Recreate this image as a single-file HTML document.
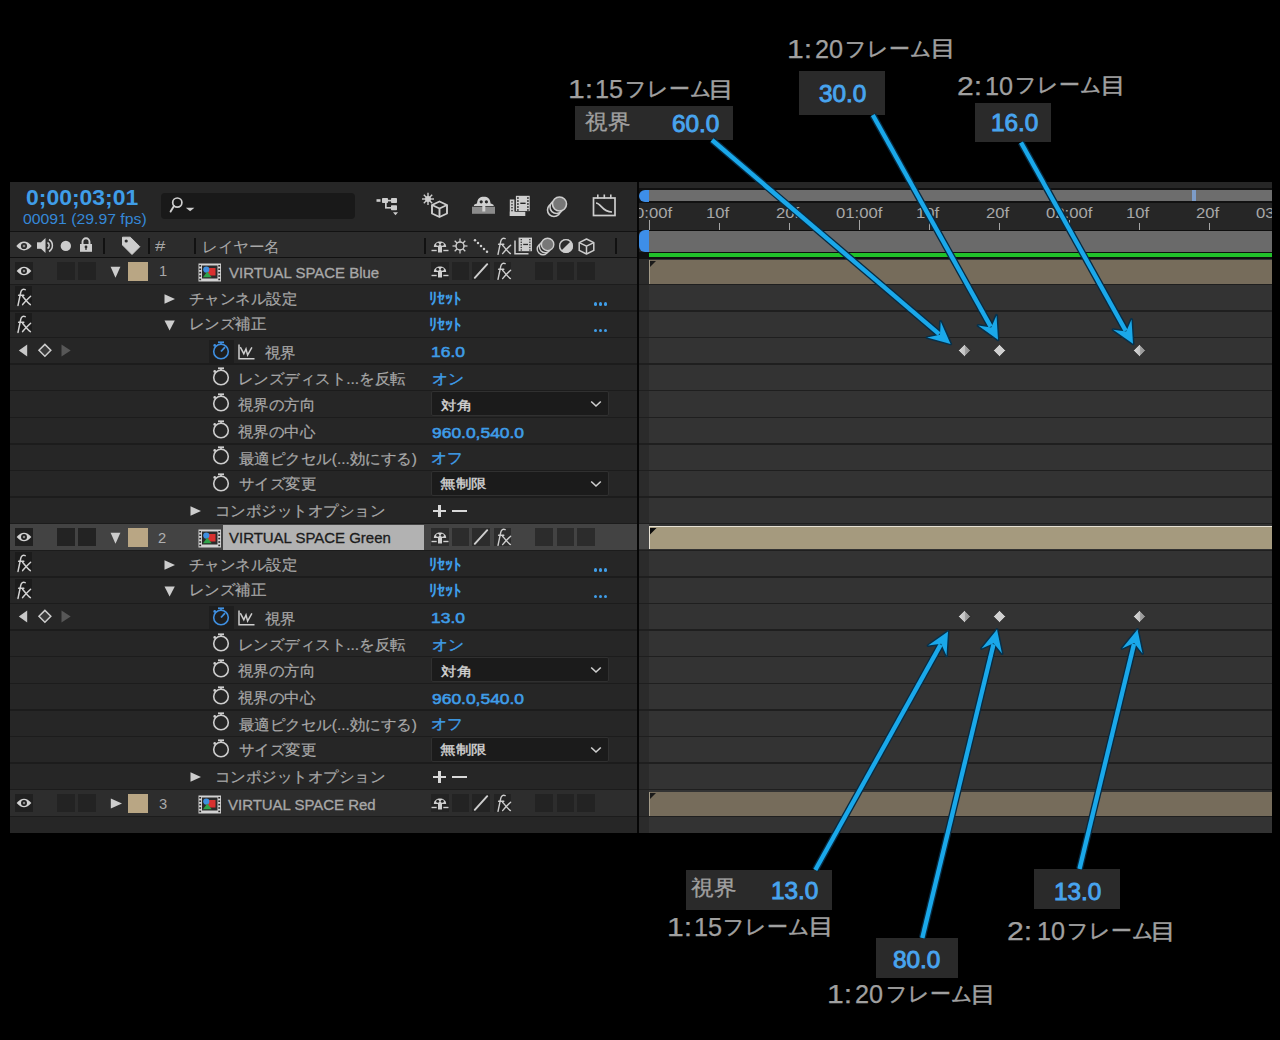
<!DOCTYPE html><html><head><meta charset="utf-8"><style>
*{margin:0;padding:0;box-sizing:border-box}
html,body{width:1280px;height:1040px;overflow:hidden;background:#000}
body{position:relative;font-family:"Liberation Sans",sans-serif;color:#a8a8a8}
.a{position:absolute}
.t{position:absolute;white-space:nowrap;line-height:1;transform-origin:0 0}
svg{position:absolute;overflow:visible}
</style></head><body><div class="a" style="left:10.00px;top:182.00px;width:1262.00px;height:651.00px;background:#242424;"></div><div class="a" style="left:10.00px;top:182.00px;width:628.00px;height:48.60px;background:#262626;"></div><div class="a" style="left:639.00px;top:182.00px;width:633.00px;height:48.60px;background:#262626;"></div><div class="a" style="left:10.00px;top:230.60px;width:1262.00px;height:1.60px;background:#121212;"></div><div class="a" style="left:10.00px;top:232.20px;width:628.00px;height:25.60px;background:#2c2c2c;"></div><div class="a" style="left:10.00px;top:257.00px;width:1262.00px;height:2.00px;background:#111111;"></div><div class="a" style="left:10.00px;top:258.40px;width:628.00px;height:26.60px;background:#2d2d2d;"></div><div class="a" style="left:649.00px;top:258.40px;width:623.00px;height:26.60px;background:#333333;"></div><div class="a" style="left:639.00px;top:258.40px;width:10.00px;height:26.60px;background:#2b2b2b;"></div><div class="a" style="left:10.00px;top:283.50px;width:628.00px;height:1.50px;background:#1c1c1c;"></div><div class="a" style="left:639.00px;top:283.50px;width:633.00px;height:1.50px;background:#1f1f1f;"></div><div class="a" style="left:10.00px;top:285.00px;width:628.00px;height:26.60px;background:#262626;"></div><div class="a" style="left:649.00px;top:285.00px;width:623.00px;height:26.60px;background:#333333;"></div><div class="a" style="left:639.00px;top:285.00px;width:10.00px;height:26.60px;background:#2b2b2b;"></div><div class="a" style="left:10.00px;top:310.10px;width:628.00px;height:1.50px;background:#1c1c1c;"></div><div class="a" style="left:639.00px;top:310.10px;width:633.00px;height:1.50px;background:#1f1f1f;"></div><div class="a" style="left:10.00px;top:311.60px;width:628.00px;height:26.60px;background:#262626;"></div><div class="a" style="left:649.00px;top:311.60px;width:623.00px;height:26.60px;background:#333333;"></div><div class="a" style="left:639.00px;top:311.60px;width:10.00px;height:26.60px;background:#2b2b2b;"></div><div class="a" style="left:10.00px;top:336.70px;width:628.00px;height:1.50px;background:#1c1c1c;"></div><div class="a" style="left:639.00px;top:336.70px;width:633.00px;height:1.50px;background:#1f1f1f;"></div><div class="a" style="left:10.00px;top:338.20px;width:628.00px;height:26.60px;background:#262626;"></div><div class="a" style="left:649.00px;top:338.20px;width:623.00px;height:26.60px;background:#333333;"></div><div class="a" style="left:639.00px;top:338.20px;width:10.00px;height:26.60px;background:#2b2b2b;"></div><div class="a" style="left:10.00px;top:363.30px;width:628.00px;height:1.50px;background:#1c1c1c;"></div><div class="a" style="left:639.00px;top:363.30px;width:633.00px;height:1.50px;background:#1f1f1f;"></div><div class="a" style="left:10.00px;top:364.80px;width:628.00px;height:26.60px;background:#262626;"></div><div class="a" style="left:649.00px;top:364.80px;width:623.00px;height:26.60px;background:#333333;"></div><div class="a" style="left:639.00px;top:364.80px;width:10.00px;height:26.60px;background:#2b2b2b;"></div><div class="a" style="left:10.00px;top:389.90px;width:628.00px;height:1.50px;background:#1c1c1c;"></div><div class="a" style="left:639.00px;top:389.90px;width:633.00px;height:1.50px;background:#1f1f1f;"></div><div class="a" style="left:10.00px;top:391.40px;width:628.00px;height:26.60px;background:#262626;"></div><div class="a" style="left:649.00px;top:391.40px;width:623.00px;height:26.60px;background:#333333;"></div><div class="a" style="left:639.00px;top:391.40px;width:10.00px;height:26.60px;background:#2b2b2b;"></div><div class="a" style="left:10.00px;top:416.50px;width:628.00px;height:1.50px;background:#1c1c1c;"></div><div class="a" style="left:639.00px;top:416.50px;width:633.00px;height:1.50px;background:#1f1f1f;"></div><div class="a" style="left:10.00px;top:418.00px;width:628.00px;height:26.60px;background:#262626;"></div><div class="a" style="left:649.00px;top:418.00px;width:623.00px;height:26.60px;background:#333333;"></div><div class="a" style="left:639.00px;top:418.00px;width:10.00px;height:26.60px;background:#2b2b2b;"></div><div class="a" style="left:10.00px;top:443.10px;width:628.00px;height:1.50px;background:#1c1c1c;"></div><div class="a" style="left:639.00px;top:443.10px;width:633.00px;height:1.50px;background:#1f1f1f;"></div><div class="a" style="left:10.00px;top:444.60px;width:628.00px;height:26.60px;background:#262626;"></div><div class="a" style="left:649.00px;top:444.60px;width:623.00px;height:26.60px;background:#333333;"></div><div class="a" style="left:639.00px;top:444.60px;width:10.00px;height:26.60px;background:#2b2b2b;"></div><div class="a" style="left:10.00px;top:469.70px;width:628.00px;height:1.50px;background:#1c1c1c;"></div><div class="a" style="left:639.00px;top:469.70px;width:633.00px;height:1.50px;background:#1f1f1f;"></div><div class="a" style="left:10.00px;top:471.20px;width:628.00px;height:26.60px;background:#262626;"></div><div class="a" style="left:649.00px;top:471.20px;width:623.00px;height:26.60px;background:#333333;"></div><div class="a" style="left:639.00px;top:471.20px;width:10.00px;height:26.60px;background:#2b2b2b;"></div><div class="a" style="left:10.00px;top:496.30px;width:628.00px;height:1.50px;background:#1c1c1c;"></div><div class="a" style="left:639.00px;top:496.30px;width:633.00px;height:1.50px;background:#1f1f1f;"></div><div class="a" style="left:10.00px;top:497.80px;width:628.00px;height:26.60px;background:#262626;"></div><div class="a" style="left:649.00px;top:497.80px;width:623.00px;height:26.60px;background:#333333;"></div><div class="a" style="left:639.00px;top:497.80px;width:10.00px;height:26.60px;background:#2b2b2b;"></div><div class="a" style="left:10.00px;top:522.90px;width:628.00px;height:1.50px;background:#1c1c1c;"></div><div class="a" style="left:639.00px;top:522.90px;width:633.00px;height:1.50px;background:#1f1f1f;"></div><div class="a" style="left:10.00px;top:524.40px;width:628.00px;height:26.60px;background:#434343;"></div><div class="a" style="left:649.00px;top:524.40px;width:623.00px;height:26.60px;background:#333333;"></div><div class="a" style="left:639.00px;top:524.40px;width:10.00px;height:26.60px;background:#2b2b2b;"></div><div class="a" style="left:10.00px;top:549.50px;width:628.00px;height:1.50px;background:#1c1c1c;"></div><div class="a" style="left:639.00px;top:549.50px;width:633.00px;height:1.50px;background:#1f1f1f;"></div><div class="a" style="left:10.00px;top:551.00px;width:628.00px;height:26.60px;background:#262626;"></div><div class="a" style="left:649.00px;top:551.00px;width:623.00px;height:26.60px;background:#333333;"></div><div class="a" style="left:639.00px;top:551.00px;width:10.00px;height:26.60px;background:#2b2b2b;"></div><div class="a" style="left:10.00px;top:576.10px;width:628.00px;height:1.50px;background:#1c1c1c;"></div><div class="a" style="left:639.00px;top:576.10px;width:633.00px;height:1.50px;background:#1f1f1f;"></div><div class="a" style="left:10.00px;top:577.60px;width:628.00px;height:26.60px;background:#262626;"></div><div class="a" style="left:649.00px;top:577.60px;width:623.00px;height:26.60px;background:#333333;"></div><div class="a" style="left:639.00px;top:577.60px;width:10.00px;height:26.60px;background:#2b2b2b;"></div><div class="a" style="left:10.00px;top:602.70px;width:628.00px;height:1.50px;background:#1c1c1c;"></div><div class="a" style="left:639.00px;top:602.70px;width:633.00px;height:1.50px;background:#1f1f1f;"></div><div class="a" style="left:10.00px;top:604.20px;width:628.00px;height:26.60px;background:#262626;"></div><div class="a" style="left:649.00px;top:604.20px;width:623.00px;height:26.60px;background:#333333;"></div><div class="a" style="left:639.00px;top:604.20px;width:10.00px;height:26.60px;background:#2b2b2b;"></div><div class="a" style="left:10.00px;top:629.30px;width:628.00px;height:1.50px;background:#1c1c1c;"></div><div class="a" style="left:639.00px;top:629.30px;width:633.00px;height:1.50px;background:#1f1f1f;"></div><div class="a" style="left:10.00px;top:630.80px;width:628.00px;height:26.60px;background:#262626;"></div><div class="a" style="left:649.00px;top:630.80px;width:623.00px;height:26.60px;background:#333333;"></div><div class="a" style="left:639.00px;top:630.80px;width:10.00px;height:26.60px;background:#2b2b2b;"></div><div class="a" style="left:10.00px;top:655.90px;width:628.00px;height:1.50px;background:#1c1c1c;"></div><div class="a" style="left:639.00px;top:655.90px;width:633.00px;height:1.50px;background:#1f1f1f;"></div><div class="a" style="left:10.00px;top:657.40px;width:628.00px;height:26.60px;background:#262626;"></div><div class="a" style="left:649.00px;top:657.40px;width:623.00px;height:26.60px;background:#333333;"></div><div class="a" style="left:639.00px;top:657.40px;width:10.00px;height:26.60px;background:#2b2b2b;"></div><div class="a" style="left:10.00px;top:682.50px;width:628.00px;height:1.50px;background:#1c1c1c;"></div><div class="a" style="left:639.00px;top:682.50px;width:633.00px;height:1.50px;background:#1f1f1f;"></div><div class="a" style="left:10.00px;top:684.00px;width:628.00px;height:26.60px;background:#262626;"></div><div class="a" style="left:649.00px;top:684.00px;width:623.00px;height:26.60px;background:#333333;"></div><div class="a" style="left:639.00px;top:684.00px;width:10.00px;height:26.60px;background:#2b2b2b;"></div><div class="a" style="left:10.00px;top:709.10px;width:628.00px;height:1.50px;background:#1c1c1c;"></div><div class="a" style="left:639.00px;top:709.10px;width:633.00px;height:1.50px;background:#1f1f1f;"></div><div class="a" style="left:10.00px;top:710.60px;width:628.00px;height:26.60px;background:#262626;"></div><div class="a" style="left:649.00px;top:710.60px;width:623.00px;height:26.60px;background:#333333;"></div><div class="a" style="left:639.00px;top:710.60px;width:10.00px;height:26.60px;background:#2b2b2b;"></div><div class="a" style="left:10.00px;top:735.70px;width:628.00px;height:1.50px;background:#1c1c1c;"></div><div class="a" style="left:639.00px;top:735.70px;width:633.00px;height:1.50px;background:#1f1f1f;"></div><div class="a" style="left:10.00px;top:737.20px;width:628.00px;height:26.60px;background:#262626;"></div><div class="a" style="left:649.00px;top:737.20px;width:623.00px;height:26.60px;background:#333333;"></div><div class="a" style="left:639.00px;top:737.20px;width:10.00px;height:26.60px;background:#2b2b2b;"></div><div class="a" style="left:10.00px;top:762.30px;width:628.00px;height:1.50px;background:#1c1c1c;"></div><div class="a" style="left:639.00px;top:762.30px;width:633.00px;height:1.50px;background:#1f1f1f;"></div><div class="a" style="left:10.00px;top:763.80px;width:628.00px;height:26.60px;background:#262626;"></div><div class="a" style="left:649.00px;top:763.80px;width:623.00px;height:26.60px;background:#333333;"></div><div class="a" style="left:639.00px;top:763.80px;width:10.00px;height:26.60px;background:#2b2b2b;"></div><div class="a" style="left:10.00px;top:788.90px;width:628.00px;height:1.50px;background:#1c1c1c;"></div><div class="a" style="left:639.00px;top:788.90px;width:633.00px;height:1.50px;background:#1f1f1f;"></div><div class="a" style="left:10.00px;top:790.40px;width:628.00px;height:26.60px;background:#2d2d2d;"></div><div class="a" style="left:649.00px;top:790.40px;width:623.00px;height:26.60px;background:#333333;"></div><div class="a" style="left:639.00px;top:790.40px;width:10.00px;height:26.60px;background:#2b2b2b;"></div><div class="a" style="left:10.00px;top:815.50px;width:628.00px;height:1.50px;background:#1c1c1c;"></div><div class="a" style="left:639.00px;top:815.50px;width:633.00px;height:1.50px;background:#1f1f1f;"></div><div class="a" style="left:10.00px;top:817.00px;width:628.00px;height:16.00px;background:#262626;"></div><div class="a" style="left:649.00px;top:817.00px;width:623.00px;height:16.00px;background:#333333;"></div><div class="a" style="left:639.00px;top:817.00px;width:10.00px;height:16.00px;background:#2b2b2b;"></div><div class="a" style="left:637.40px;top:182.00px;width:2.00px;height:651.00px;background:#060606;"></div><div class="a" style="left:160.80px;top:192.90px;width:194.50px;height:25.80px;background:#191919;border-radius:4px"></div><svg style="left:168px;top:196px" width="30" height="18" viewBox="0 0 30 18"><circle cx="9.3" cy="6.6" r="4.6" fill="none" stroke="#cfcfcf" stroke-width="1.7"/><line x1="6" y1="10" x2="2.6" y2="15.6" stroke="#cfcfcf" stroke-width="1.9" stroke-linecap="round"/><polygon points="17.8,11.8 26.4,11.8 22.1,15.2" fill="#cfcfcf"/></svg><svg style="left:376px;top:197px" width="27" height="21" viewBox="0 0 27 21"><g fill="#cdcdcd"><rect x="0.5" y="2.2" width="4" height="2.6"/><rect x="6" y="1" width="6" height="5" rx="0.8"/><rect x="15" y="1" width="6" height="5" rx="0.8"/><rect x="15" y="8.3" width="6" height="5" rx="0.8"/><rect x="12" y="2.8" width="3" height="1.6"/><rect x="9" y="5" width="1.7" height="6"/><rect x="9" y="10" width="6" height="1.6"/><polygon points="17,15.2 22,15.2 19.5,18.2"/></g></svg><svg style="left:422px;top:192px" width="28" height="26" viewBox="0 0 28 26"><g stroke="#cdcdcd" stroke-width="1.4" fill="none"><line x1="6" y1="0.8" x2="6" y2="13"/><line x1="0" y1="7" x2="12" y2="7"/><line x1="1.8" y1="2.8" x2="10.2" y2="11.2"/><line x1="10.2" y1="2.8" x2="1.8" y2="11.2"/></g><circle cx="6" cy="7" r="3" fill="#cdcdcd"/><g stroke="#cdcdcd" stroke-width="1.9" fill="#262626" stroke-linejoin="round"><polygon points="17.5,9.5 25,13 25,21.5 17.5,25 10,21.5 10,13"/><polyline points="10,13 17.5,16.5 25,13" fill="none"/><line x1="17.5" y1="16.5" x2="17.5" y2="25"/></g></svg><svg style="left:471px;top:195px" width="26" height="21" viewBox="0 0 26 21"><rect x="1" y="11.7" width="23" height="7.1" fill="#8b8b8b"/><path d="M2.8,11 C2.8,9.2 5,9 6,8.6 C6.5,3.2 9,1.8 12.8,1.8 C16.6,1.8 19.1,3.2 19.6,8.6 C20.6,9 22.8,9.2 22.8,11 Z" fill="#d0d0d0"/><circle cx="10.2" cy="6.8" r="1.6" fill="#262626"/><circle cx="15.4" cy="6.8" r="1.6" fill="#262626"/><rect x="11.3" y="8" width="3" height="8.5" fill="#d0d0d0"/></svg><svg style="left:509px;top:195px" width="23" height="22" viewBox="0 0 23 22"><rect x="0.8" y="4.5" width="4.6" height="16.5" fill="#cdcdcd"/><rect x="0.8" y="16.6" width="15.5" height="4.4" fill="#cdcdcd"/><rect x="2.3" y="6.2" width="1.4" height="1.4" fill="#262626"/><rect x="2.3" y="9.1" width="1.4" height="1.4" fill="#262626"/><rect x="2.3" y="12.0" width="1.4" height="1.4" fill="#262626"/><rect x="2.3" y="14.9" width="1.4" height="1.4" fill="#262626"/><rect x="6.4" y="0.3" width="14.8" height="16.3" fill="#262626"/><rect x="6.9" y="0.8" width="13.8" height="15.3" fill="#d0d0d0"/><rect x="8.1" y="2.2" width="1.6" height="1.6" fill="#262626"/><rect x="18.1" y="2.2" width="1.6" height="1.6" fill="#262626"/><rect x="8.1" y="5.2" width="1.6" height="1.6" fill="#262626"/><rect x="18.1" y="5.2" width="1.6" height="1.6" fill="#262626"/><rect x="8.1" y="8.2" width="1.6" height="1.6" fill="#262626"/><rect x="18.1" y="8.2" width="1.6" height="1.6" fill="#262626"/><rect x="8.1" y="11.2" width="1.6" height="1.6" fill="#262626"/><rect x="18.1" y="11.2" width="1.6" height="1.6" fill="#262626"/><rect x="8.1" y="14.2" width="1.6" height="1.6" fill="#262626"/><rect x="18.1" y="14.2" width="1.6" height="1.6" fill="#262626"/><rect x="11.3" y="7.6" width="5.3" height="1.4" fill="#262626"/></svg><svg style="left:545px;top:195px" width="24" height="22" viewBox="0 0 24 22"><g fill="none" stroke="#cdcdcd" stroke-width="1.6"><circle cx="9" cy="15" r="6.5"/><circle cx="11.5" cy="12" r="6.5" fill="#262626"/><circle cx="14.5" cy="9" r="7" fill="#777"/></g></svg><svg style="left:592px;top:194px" width="25" height="23" viewBox="0 0 25 23"><g fill="none" stroke="#cdcdcd" stroke-width="1.7"><rect x="1.5" y="4" width="21.5" height="17.5"/><path d="M4,9 C9,9 10,18 20,18"/></g><g fill="#cdcdcd"><rect x="5" y="0.5" width="1.6" height="4"/><rect x="11.5" y="0.5" width="1.6" height="4"/><rect x="18" y="0.5" width="1.6" height="4"/></g></svg><svg style="left:14.8px;top:239.6px" width="18" height="12" viewBox="0 0 18 12"><g transform="translate(9,6) scale(1.0)"><path d="M-7.7,0 Q0,-8.8 7.7,0 Q0,8.8 -7.7,0Z" fill="#cfcfcf"/><circle r="3.1" fill="#2c2c2c"/><circle r="1.3" fill="#888"/></g></svg><svg style="left:36px;top:237px" width="19" height="17" viewBox="0 0 19 17"><g fill="#cdcdcd"><rect x="1" y="5.3" width="4" height="6.5"/><polygon points="5,5.3 9.5,1 9.5,16 5,11.8"/></g><g fill="none" stroke="#cdcdcd" stroke-width="1.5"><path d="M11.5,5.5 A3.5,3.5 0 0 1 11.5,11.5"/><path d="M13,2.5 A7,7 0 0 1 13,14.5"/></g></svg><svg style="left:60px;top:240px" width="12" height="12" viewBox="0 0 12 12"><circle cx="5.8" cy="5.9" r="5.2" fill="#cdcdcd"/></svg><svg style="left:79px;top:237px" width="15" height="16" viewBox="0 0 15 16"><path d="M3.5,7 V4.8 A3.5,3.5 0 0 1 10.5,4.8 V7" fill="none" stroke="#cdcdcd" stroke-width="1.9"/><rect x="1" y="7" width="12" height="7.8" fill="#cdcdcd"/><circle cx="7" cy="10" r="1.4" fill="#2c2c2c"/><rect x="6.4" y="10" width="1.2" height="3" fill="#2c2c2c"/></svg><div class="a" style="left:103.00px;top:237.50px;width:1.80px;height:16.50px;background:#111;"></div><div class="a" style="left:148.30px;top:237.50px;width:1.80px;height:16.50px;background:#111;"></div><div class="a" style="left:194.00px;top:237.50px;width:1.80px;height:16.50px;background:#111;"></div><div class="a" style="left:424.20px;top:237.50px;width:1.80px;height:16.50px;background:#111;"></div><div class="a" style="left:615.00px;top:237.50px;width:1.80px;height:16.50px;background:#111;"></div><svg style="left:121px;top:236px" width="20" height="19" viewBox="0 0 20 19"><path d="M1.5,1.2 H9.3 L18.8,10.7 L11,18.5 L1.5,9 Z" fill="#cdcdcd" stroke="#cdcdcd" stroke-width="1" stroke-linejoin="round"/><circle cx="5.2" cy="5" r="1.6" fill="#2c2c2c"/></svg><svg style="left:430.5px;top:237.5px" width="18" height="17" viewBox="0 0 18 17"><path d="M2.8,9 C2.8,1.6 15.2,1.6 15.2,9 Z" fill="#cdcdcd"/><rect x="7" y="6" width="4" height="8.5" fill="#cdcdcd"/><circle cx="6.7" cy="6.3" r="1.5" fill="#2c2c2c"/><circle cx="11.3" cy="6.3" r="1.5" fill="#2c2c2c"/><rect x="0.5" y="11.8" width="5.2" height="1.4" fill="#cdcdcd"/><rect x="12.3" y="11.8" width="5.2" height="1.4" fill="#cdcdcd"/></svg><svg style="left:452px;top:237.5px" width="16" height="16" viewBox="0 0 16 16"><g stroke="#cdcdcd" stroke-width="1.3"><line x1="8" y1="0.5" x2="8" y2="15.5"/><line x1="0.5" y1="8" x2="15.5" y2="8"/><line x1="2.7" y1="2.7" x2="13.3" y2="13.3"/><line x1="13.3" y1="2.7" x2="2.7" y2="13.3"/></g><circle cx="8" cy="8" r="4" fill="#2c2c2c" stroke="#cdcdcd" stroke-width="1.5"/></svg><svg style="left:472.5px;top:237.5px" width="16" height="17" viewBox="0 0 16 17"><g fill="#cdcdcd"><circle cx="2.0" cy="2.2" r="1.25"/><circle cx="5.0" cy="5.1" r="1.25"/><circle cx="8.0" cy="8.0" r="1.25"/><circle cx="11.0" cy="10.9" r="1.25"/><circle cx="14.0" cy="13.8" r="1.25"/></g></svg><svg style="left:494.5px;top:236.5px" width="17" height="19" viewBox="0 0 17 19"><g fill="none" stroke="#cdcdcd" stroke-width="1.4" stroke-linecap="round"><path d="M10.2,1.6 C8,0.6 6.4,1.6 5.8,4.2 L3.0,17.4"/><path d="M3.6,7.2 H8.8"/><path d="M7.6,8.2 C9.5,10.5 12.5,14.5 15.4,16.6"/><path d="M15.6,8.2 C12.5,11.0 10.2,13.5 7.6,16.6"/></g></svg><svg style="left:513.5px;top:237px" width="19" height="18" viewBox="0 0 19 18"><polyline points="1,3.5 1,16.8 14.5,16.8" fill="none" stroke="#cdcdcd" stroke-width="1.5"/><rect x="4.6" y="0.6" width="13.4" height="13.6" fill="#cdcdcd"/><rect x="6.6" y="2.0" width="1.3" height="1.3" fill="#2c2c2c"/><rect x="15.2" y="2.0" width="1.3" height="1.3" fill="#2c2c2c"/><rect x="6.6" y="4.6" width="1.3" height="1.3" fill="#2c2c2c"/><rect x="15.2" y="4.6" width="1.3" height="1.3" fill="#2c2c2c"/><rect x="6.6" y="7.2" width="1.3" height="1.3" fill="#2c2c2c"/><rect x="15.2" y="7.2" width="1.3" height="1.3" fill="#2c2c2c"/><rect x="6.6" y="9.8" width="1.3" height="1.3" fill="#2c2c2c"/><rect x="15.2" y="9.8" width="1.3" height="1.3" fill="#2c2c2c"/><rect x="6.6" y="12.4" width="1.3" height="1.3" fill="#2c2c2c"/><rect x="15.2" y="12.4" width="1.3" height="1.3" fill="#2c2c2c"/><rect x="9.2" y="6.8" width="4.8" height="1.3" fill="#2c2c2c"/></svg><svg style="left:535.5px;top:236.5px" width="19" height="19" viewBox="0 0 19 19"><g fill="none" stroke="#cdcdcd" stroke-width="1.4"><circle cx="7" cy="12" r="5.8"/><circle cx="9.2" cy="9.8" r="5.8" fill="#2c2c2c"/><circle cx="11.6" cy="7.4" r="6.2" fill="#777"/></g></svg><svg style="left:557.5px;top:237.5px" width="16" height="16" viewBox="0 0 16 16"><circle cx="8" cy="8" r="7" fill="#cdcdcd"/><path d="M3.2,12.8 L12.8,3.2 A6.8,6.8 0 0 0 3.2,12.8Z" fill="#2c2c2c"/><circle cx="8" cy="8" r="6.4" fill="none" stroke="#cdcdcd" stroke-width="1.4"/></svg><svg style="left:578px;top:237.5px" width="17" height="17" viewBox="0 0 17 17"><g stroke="#cdcdcd" stroke-width="1.5" fill="none" stroke-linejoin="round"><polygon points="8.5,1 15.8,4.6 15.8,12.4 8.5,16 1.2,12.4 1.2,4.6"/><polyline points="1.2,4.6 8.5,8.2 15.8,4.6"/><line x1="8.5" y1="8.2" x2="8.5" y2="16"/></g></svg><div class="a" style="left:15.20px;top:262.40px;width:17.60px;height:17.20px;background:#202020;"></div><svg style="left:14.899999999999999px;top:264.6px" width="18" height="12" viewBox="0 0 18 12"><g transform="translate(9,6) scale(0.96)"><path d="M-7.7,0 Q0,-8.8 7.7,0 Q0,8.8 -7.7,0Z" fill="#d2d2d2"/><circle r="3.1" fill="#202020"/><circle r="1.3" fill="#888"/></g></svg><div class="a" style="left:56.90px;top:261.90px;width:17.70px;height:18.10px;background:#232323;"></div><div class="a" style="left:77.50px;top:261.90px;width:18.50px;height:18.10px;background:#232323;"></div><svg style="left:110px;top:265.5px" width="11" height="12" viewBox="0 0 11 12"><polygon points="0.6,0.8 10.4,0.8 5.5,11.8" fill="#cdcdcd"/></svg><div class="a" style="left:127.80px;top:261.90px;width:20.30px;height:19.30px;background:#b9a684;"></div><svg style="left:197.5px;top:262.8px" width="23.5" height="19" viewBox="0 0 23.5 19"><rect x="0.5" y="0.5" width="22.5" height="18" fill="#d2d2d2"/><rect x="4" y="2.5" width="15.5" height="13" fill="#2a2a2a"/><rect x="1.3" y="2.0" width="1.8" height="1.6" fill="#2a2a2a"/><rect x="20.3" y="2.0" width="1.8" height="1.6" fill="#2a2a2a"/><rect x="1.3" y="5.4" width="1.8" height="1.6" fill="#2a2a2a"/><rect x="20.3" y="5.4" width="1.8" height="1.6" fill="#2a2a2a"/><rect x="1.3" y="8.8" width="1.8" height="1.6" fill="#2a2a2a"/><rect x="20.3" y="8.8" width="1.8" height="1.6" fill="#2a2a2a"/><rect x="1.3" y="12.2" width="1.8" height="1.6" fill="#2a2a2a"/><rect x="20.3" y="12.2" width="1.8" height="1.6" fill="#2a2a2a"/><rect x="1.3" y="15.6" width="1.8" height="1.6" fill="#2a2a2a"/><rect x="20.3" y="15.6" width="1.8" height="1.6" fill="#2a2a2a"/><rect x="9" y="5" width="8.5" height="7.5" fill="#d8312f"/><circle cx="8.3" cy="6.6" r="3.1" fill="#3f8fe0"/><polygon points="5,14.2 9.3,8.6 13.6,14.2" fill="#2fa34a"/></svg><div class="a" style="left:430.50px;top:261.60px;width:18.00px;height:18.00px;background:#232323;"></div><div class="a" style="left:451.80px;top:261.60px;width:17.20px;height:18.00px;background:#232323;"></div><div class="a" style="left:472.30px;top:261.60px;width:18.00px;height:18.00px;background:#232323;"></div><div class="a" style="left:493.60px;top:261.60px;width:17.20px;height:18.00px;background:#232323;"></div><div class="a" style="left:535.40px;top:261.60px;width:17.20px;height:18.00px;background:#232323;"></div><div class="a" style="left:556.70px;top:261.60px;width:17.30px;height:18.00px;background:#232323;"></div><div class="a" style="left:577.20px;top:261.60px;width:18.00px;height:18.00px;background:#232323;"></div><svg style="left:430.5px;top:262.8px" width="18" height="17" viewBox="0 0 18 17"><path d="M2.8,9 C2.8,1.6 15.2,1.6 15.2,9 Z" fill="#d0d0d0"/><rect x="7" y="6" width="4" height="8.5" fill="#d0d0d0"/><circle cx="6.7" cy="6.3" r="1.5" fill="#232323"/><circle cx="11.3" cy="6.3" r="1.5" fill="#232323"/><rect x="0.5" y="11.8" width="5.2" height="1.4" fill="#d0d0d0"/><rect x="12.3" y="11.8" width="5.2" height="1.4" fill="#d0d0d0"/></svg><svg style="left:472.3px;top:261.6px" width="18" height="18" viewBox="0 0 18 18"><line x1="2.8" y1="15.8" x2="15.2" y2="2.2" stroke="#cdcdcd" stroke-width="2" stroke-linecap="round"/></svg><svg style="left:494.5px;top:261.5px" width="17" height="19" viewBox="0 0 17 19"><g fill="none" stroke="#cdcdcd" stroke-width="1.4" stroke-linecap="round"><path d="M10.2,1.6 C8,0.6 6.4,1.6 5.8,4.2 L3.0,17.4"/><path d="M3.6,7.2 H8.8"/><path d="M7.6,8.2 C9.5,10.5 12.5,14.5 15.4,16.6"/><path d="M15.6,8.2 C12.5,11.0 10.2,13.5 7.6,16.6"/></g></svg><div class="a" style="left:15.20px;top:528.40px;width:17.60px;height:17.20px;background:#202020;"></div><svg style="left:14.899999999999999px;top:530.6px" width="18" height="12" viewBox="0 0 18 12"><g transform="translate(9,6) scale(0.96)"><path d="M-7.7,0 Q0,-8.8 7.7,0 Q0,8.8 -7.7,0Z" fill="#d2d2d2"/><circle r="3.1" fill="#202020"/><circle r="1.3" fill="#888"/></g></svg><div class="a" style="left:56.90px;top:527.90px;width:17.70px;height:18.10px;background:#232323;"></div><div class="a" style="left:77.50px;top:527.90px;width:18.50px;height:18.10px;background:#232323;"></div><svg style="left:110px;top:531.5px" width="11" height="12" viewBox="0 0 11 12"><polygon points="0.6,0.8 10.4,0.8 5.5,11.8" fill="#cdcdcd"/></svg><div class="a" style="left:127.80px;top:527.90px;width:20.30px;height:19.30px;background:#b9a684;"></div><div class="a" style="left:222.70px;top:525.00px;width:201.30px;height:25.00px;background:#b2b2b2;"></div><svg style="left:197.5px;top:528.8px" width="23.5" height="19" viewBox="0 0 23.5 19"><rect x="0.5" y="0.5" width="22.5" height="18" fill="#d2d2d2"/><rect x="4" y="2.5" width="15.5" height="13" fill="#2a2a2a"/><rect x="1.3" y="2.0" width="1.8" height="1.6" fill="#2a2a2a"/><rect x="20.3" y="2.0" width="1.8" height="1.6" fill="#2a2a2a"/><rect x="1.3" y="5.4" width="1.8" height="1.6" fill="#2a2a2a"/><rect x="20.3" y="5.4" width="1.8" height="1.6" fill="#2a2a2a"/><rect x="1.3" y="8.8" width="1.8" height="1.6" fill="#2a2a2a"/><rect x="20.3" y="8.8" width="1.8" height="1.6" fill="#2a2a2a"/><rect x="1.3" y="12.2" width="1.8" height="1.6" fill="#2a2a2a"/><rect x="20.3" y="12.2" width="1.8" height="1.6" fill="#2a2a2a"/><rect x="1.3" y="15.6" width="1.8" height="1.6" fill="#2a2a2a"/><rect x="20.3" y="15.6" width="1.8" height="1.6" fill="#2a2a2a"/><rect x="9" y="5" width="8.5" height="7.5" fill="#d8312f"/><circle cx="8.3" cy="6.6" r="3.1" fill="#3f8fe0"/><polygon points="5,14.2 9.3,8.6 13.6,14.2" fill="#2fa34a"/></svg><div class="a" style="left:430.50px;top:527.60px;width:18.00px;height:18.00px;background:#2c2c2c;"></div><div class="a" style="left:451.80px;top:527.60px;width:17.20px;height:18.00px;background:#2c2c2c;"></div><div class="a" style="left:472.30px;top:527.60px;width:18.00px;height:18.00px;background:#2c2c2c;"></div><div class="a" style="left:493.60px;top:527.60px;width:17.20px;height:18.00px;background:#2c2c2c;"></div><div class="a" style="left:535.40px;top:527.60px;width:17.20px;height:18.00px;background:#2c2c2c;"></div><div class="a" style="left:556.70px;top:527.60px;width:17.30px;height:18.00px;background:#2c2c2c;"></div><div class="a" style="left:577.20px;top:527.60px;width:18.00px;height:18.00px;background:#2c2c2c;"></div><svg style="left:430.5px;top:528.8px" width="18" height="17" viewBox="0 0 18 17"><path d="M2.8,9 C2.8,1.6 15.2,1.6 15.2,9 Z" fill="#d0d0d0"/><rect x="7" y="6" width="4" height="8.5" fill="#d0d0d0"/><circle cx="6.7" cy="6.3" r="1.5" fill="#2c2c2c"/><circle cx="11.3" cy="6.3" r="1.5" fill="#2c2c2c"/><rect x="0.5" y="11.8" width="5.2" height="1.4" fill="#d0d0d0"/><rect x="12.3" y="11.8" width="5.2" height="1.4" fill="#d0d0d0"/></svg><svg style="left:472.3px;top:527.6px" width="18" height="18" viewBox="0 0 18 18"><line x1="2.8" y1="15.8" x2="15.2" y2="2.2" stroke="#cdcdcd" stroke-width="2" stroke-linecap="round"/></svg><svg style="left:494.5px;top:527.5px" width="17" height="19" viewBox="0 0 17 19"><g fill="none" stroke="#cdcdcd" stroke-width="1.4" stroke-linecap="round"><path d="M10.2,1.6 C8,0.6 6.4,1.6 5.8,4.2 L3.0,17.4"/><path d="M3.6,7.2 H8.8"/><path d="M7.6,8.2 C9.5,10.5 12.5,14.5 15.4,16.6"/><path d="M15.6,8.2 C12.5,11.0 10.2,13.5 7.6,16.6"/></g></svg><div class="a" style="left:15.20px;top:794.40px;width:17.60px;height:17.20px;background:#202020;"></div><svg style="left:14.899999999999999px;top:796.6px" width="18" height="12" viewBox="0 0 18 12"><g transform="translate(9,6) scale(0.96)"><path d="M-7.7,0 Q0,-8.8 7.7,0 Q0,8.8 -7.7,0Z" fill="#d2d2d2"/><circle r="3.1" fill="#202020"/><circle r="1.3" fill="#888"/></g></svg><div class="a" style="left:56.90px;top:793.90px;width:17.70px;height:18.10px;background:#232323;"></div><div class="a" style="left:77.50px;top:793.90px;width:18.50px;height:18.10px;background:#232323;"></div><svg style="left:109.5px;top:798px" width="13" height="11" viewBox="0 0 13 11"><polygon points="0.8,0.6 12,5.4 0.8,10.4" fill="#cdcdcd"/></svg><div class="a" style="left:127.80px;top:793.90px;width:20.30px;height:19.30px;background:#b9a684;"></div><svg style="left:197.5px;top:794.8px" width="23.5" height="19" viewBox="0 0 23.5 19"><rect x="0.5" y="0.5" width="22.5" height="18" fill="#d2d2d2"/><rect x="4" y="2.5" width="15.5" height="13" fill="#2a2a2a"/><rect x="1.3" y="2.0" width="1.8" height="1.6" fill="#2a2a2a"/><rect x="20.3" y="2.0" width="1.8" height="1.6" fill="#2a2a2a"/><rect x="1.3" y="5.4" width="1.8" height="1.6" fill="#2a2a2a"/><rect x="20.3" y="5.4" width="1.8" height="1.6" fill="#2a2a2a"/><rect x="1.3" y="8.8" width="1.8" height="1.6" fill="#2a2a2a"/><rect x="20.3" y="8.8" width="1.8" height="1.6" fill="#2a2a2a"/><rect x="1.3" y="12.2" width="1.8" height="1.6" fill="#2a2a2a"/><rect x="20.3" y="12.2" width="1.8" height="1.6" fill="#2a2a2a"/><rect x="1.3" y="15.6" width="1.8" height="1.6" fill="#2a2a2a"/><rect x="20.3" y="15.6" width="1.8" height="1.6" fill="#2a2a2a"/><rect x="9" y="5" width="8.5" height="7.5" fill="#d8312f"/><circle cx="8.3" cy="6.6" r="3.1" fill="#3f8fe0"/><polygon points="5,14.2 9.3,8.6 13.6,14.2" fill="#2fa34a"/></svg><div class="a" style="left:430.50px;top:793.60px;width:18.00px;height:18.00px;background:#232323;"></div><div class="a" style="left:451.80px;top:793.60px;width:17.20px;height:18.00px;background:#232323;"></div><div class="a" style="left:472.30px;top:793.60px;width:18.00px;height:18.00px;background:#232323;"></div><div class="a" style="left:493.60px;top:793.60px;width:17.20px;height:18.00px;background:#232323;"></div><div class="a" style="left:535.40px;top:793.60px;width:17.20px;height:18.00px;background:#232323;"></div><div class="a" style="left:556.70px;top:793.60px;width:17.30px;height:18.00px;background:#232323;"></div><div class="a" style="left:577.20px;top:793.60px;width:18.00px;height:18.00px;background:#232323;"></div><svg style="left:430.5px;top:794.8px" width="18" height="17" viewBox="0 0 18 17"><path d="M2.8,9 C2.8,1.6 15.2,1.6 15.2,9 Z" fill="#d0d0d0"/><rect x="7" y="6" width="4" height="8.5" fill="#d0d0d0"/><circle cx="6.7" cy="6.3" r="1.5" fill="#232323"/><circle cx="11.3" cy="6.3" r="1.5" fill="#232323"/><rect x="0.5" y="11.8" width="5.2" height="1.4" fill="#d0d0d0"/><rect x="12.3" y="11.8" width="5.2" height="1.4" fill="#d0d0d0"/></svg><svg style="left:472.3px;top:793.6px" width="18" height="18" viewBox="0 0 18 18"><line x1="2.8" y1="15.8" x2="15.2" y2="2.2" stroke="#cdcdcd" stroke-width="2" stroke-linecap="round"/></svg><svg style="left:494.5px;top:793.5px" width="17" height="19" viewBox="0 0 17 19"><g fill="none" stroke="#cdcdcd" stroke-width="1.4" stroke-linecap="round"><path d="M10.2,1.6 C8,0.6 6.4,1.6 5.8,4.2 L3.0,17.4"/><path d="M3.6,7.2 H8.8"/><path d="M7.6,8.2 C9.5,10.5 12.5,14.5 15.4,16.6"/><path d="M15.6,8.2 C12.5,11.0 10.2,13.5 7.6,16.6"/></g></svg><div class="a" style="left:15.20px;top:286.30px;width:16.80px;height:18.50px;background:#1c1c1c;"></div><svg style="left:15.2px;top:287.9px" width="17" height="19" viewBox="0 0 17 19"><g fill="none" stroke="#d2d2d2" stroke-width="1.5" stroke-linecap="round"><path d="M10.2,1.6 C8,0.6 6.4,1.6 5.8,4.2 L3.0,17.4"/><path d="M3.6,7.2 H8.8"/><path d="M7.6,8.2 C9.5,10.5 12.5,14.5 15.4,16.6"/><path d="M15.6,8.2 C12.5,11.0 10.2,13.5 7.6,16.6"/></g></svg><div class="a" style="left:15.20px;top:312.90px;width:16.80px;height:18.50px;background:#1c1c1c;"></div><svg style="left:15.2px;top:314.49999999999994px" width="17" height="19" viewBox="0 0 17 19"><g fill="none" stroke="#d2d2d2" stroke-width="1.5" stroke-linecap="round"><path d="M10.2,1.6 C8,0.6 6.4,1.6 5.8,4.2 L3.0,17.4"/><path d="M3.6,7.2 H8.8"/><path d="M7.6,8.2 C9.5,10.5 12.5,14.5 15.4,16.6"/><path d="M15.6,8.2 C12.5,11.0 10.2,13.5 7.6,16.6"/></g></svg><svg style="left:163.5px;top:293.5px" width="12" height="11" viewBox="0 0 12 11"><polygon points="0.5,0.3 11,5 0.5,9.8" fill="#cdcdcd"/></svg><svg style="left:163.5px;top:319.5px" width="12" height="11" viewBox="0 0 12 11"><polygon points="0.5,0.5 10.8,0.5 5.6,10.5" fill="#cdcdcd"/></svg><svg style="left:189.5px;top:506px" width="12" height="11" viewBox="0 0 12 11"><polygon points="0.5,0.3 11,5 0.5,9.8" fill="#cdcdcd"/></svg><svg style="left:18px;top:344px" width="55" height="14" viewBox="0 0 55 14"><polygon points="9.2,0.6 9.2,12.6 0.8,6.6" fill="#c8c8c8"/><rect x="22.6" y="2.2" width="8.4" height="8.4" transform="rotate(45 26.9 6.5)" fill="#3a3a3a" stroke="#cdcdcd" stroke-width="1.5"/><polygon points="43.5,0.6 43.5,12.6 52.7,6.6" fill="#575757"/></svg><div class="a" style="left:209.30px;top:339.50px;width:24.50px;height:23.50px;background:#1e1e1e;"></div><svg style="left:212.2px;top:341.3px" width="18" height="19" viewBox="0 0 18 19"><g fill="none" stroke="#3f8fe0" stroke-width="1.6"><circle cx="9" cy="10.5" r="7.3"/><line x1="9" y1="1.6" x2="9" y2="3.2"/><line x1="6" y1="1.3" x2="12" y2="1.3" stroke-width="1.8"/><line x1="9" y1="10.5" x2="13" y2="6.2" stroke-width="1.8"/></g><circle cx="2.7" cy="4.4" r="1.3" fill="#3f8fe0"/></svg><svg style="left:211.9px;top:366.49999999999994px" width="18" height="19" viewBox="0 0 18 19"><g fill="none" stroke="#cdcdcd" stroke-width="1.6"><circle cx="9" cy="10.5" r="7.3"/><line x1="9" y1="1.6" x2="9" y2="3.2"/><line x1="6" y1="1.3" x2="12" y2="1.3" stroke-width="1.8"/></g><circle cx="2.7" cy="4.4" r="1.3" fill="#cdcdcd"/></svg><svg style="left:211.9px;top:393.09999999999997px" width="18" height="19" viewBox="0 0 18 19"><g fill="none" stroke="#cdcdcd" stroke-width="1.6"><circle cx="9" cy="10.5" r="7.3"/><line x1="9" y1="1.6" x2="9" y2="3.2"/><line x1="6" y1="1.3" x2="12" y2="1.3" stroke-width="1.8"/></g><circle cx="2.7" cy="4.4" r="1.3" fill="#cdcdcd"/></svg><svg style="left:211.9px;top:419.7px" width="18" height="19" viewBox="0 0 18 19"><g fill="none" stroke="#cdcdcd" stroke-width="1.6"><circle cx="9" cy="10.5" r="7.3"/><line x1="9" y1="1.6" x2="9" y2="3.2"/><line x1="6" y1="1.3" x2="12" y2="1.3" stroke-width="1.8"/></g><circle cx="2.7" cy="4.4" r="1.3" fill="#cdcdcd"/></svg><svg style="left:211.9px;top:446.3px" width="18" height="19" viewBox="0 0 18 19"><g fill="none" stroke="#cdcdcd" stroke-width="1.6"><circle cx="9" cy="10.5" r="7.3"/><line x1="9" y1="1.6" x2="9" y2="3.2"/><line x1="6" y1="1.3" x2="12" y2="1.3" stroke-width="1.8"/></g><circle cx="2.7" cy="4.4" r="1.3" fill="#cdcdcd"/></svg><svg style="left:211.9px;top:472.9px" width="18" height="19" viewBox="0 0 18 19"><g fill="none" stroke="#cdcdcd" stroke-width="1.6"><circle cx="9" cy="10.5" r="7.3"/><line x1="9" y1="1.6" x2="9" y2="3.2"/><line x1="6" y1="1.3" x2="12" y2="1.3" stroke-width="1.8"/></g><circle cx="2.7" cy="4.4" r="1.3" fill="#cdcdcd"/></svg><svg style="left:238px;top:343.5px" width="17" height="16" viewBox="0 0 17 16"><g fill="none" stroke="#cdcdcd" stroke-width="1.5"><polyline points="1,0.5 1,14.7 16.5,14.7"/><polyline points="2.3,3.2 5.8,9.7 8,4.9 9.6,11.1 13.9,3.3"/></g></svg><div class="a" style="left:593.50px;top:302.30px;width:3.40px;height:3.40px;background:#3f9de8;border-radius:50%"></div><div class="a" style="left:598.50px;top:302.30px;width:3.40px;height:3.40px;background:#3f9de8;border-radius:50%"></div><div class="a" style="left:603.50px;top:302.30px;width:3.40px;height:3.40px;background:#3f9de8;border-radius:50%"></div><div class="a" style="left:593.50px;top:328.90px;width:3.40px;height:3.40px;background:#3f9de8;border-radius:50%"></div><div class="a" style="left:598.50px;top:328.90px;width:3.40px;height:3.40px;background:#3f9de8;border-radius:50%"></div><div class="a" style="left:603.50px;top:328.90px;width:3.40px;height:3.40px;background:#3f9de8;border-radius:50%"></div><div class="a" style="left:431.20px;top:391.20px;width:177.50px;height:25.20px;background:#1b1b1b;border:1px solid #303030;border-radius:2px"></div><svg style="left:589.5px;top:400.4px" width="12" height="8" viewBox="0 0 12 8"><polyline points="1.2,1.5 6,6 10.8,1.5" fill="none" stroke="#cfcfcf" stroke-width="1.6"/></svg><div class="a" style="left:431.20px;top:471.00px;width:177.50px;height:25.20px;background:#1b1b1b;border:1px solid #303030;border-radius:2px"></div><svg style="left:589.5px;top:480.2px" width="12" height="8" viewBox="0 0 12 8"><polyline points="1.2,1.5 6,6 10.8,1.5" fill="none" stroke="#cfcfcf" stroke-width="1.6"/></svg><div class="a" style="left:433.20px;top:509.80px;width:12.60px;height:2.60px;background:#d8d8d8;"></div><div class="a" style="left:438.20px;top:504.80px;width:2.60px;height:12.60px;background:#d8d8d8;"></div><div class="a" style="left:451.50px;top:509.80px;width:15.50px;height:2.60px;background:#d8d8d8;"></div><div class="a" style="left:15.20px;top:552.30px;width:16.80px;height:18.50px;background:#1c1c1c;"></div><svg style="left:15.2px;top:553.9px" width="17" height="19" viewBox="0 0 17 19"><g fill="none" stroke="#d2d2d2" stroke-width="1.5" stroke-linecap="round"><path d="M10.2,1.6 C8,0.6 6.4,1.6 5.8,4.2 L3.0,17.4"/><path d="M3.6,7.2 H8.8"/><path d="M7.6,8.2 C9.5,10.5 12.5,14.5 15.4,16.6"/><path d="M15.6,8.2 C12.5,11.0 10.2,13.5 7.6,16.6"/></g></svg><div class="a" style="left:15.20px;top:578.90px;width:16.80px;height:18.50px;background:#1c1c1c;"></div><svg style="left:15.2px;top:580.4999999999999px" width="17" height="19" viewBox="0 0 17 19"><g fill="none" stroke="#d2d2d2" stroke-width="1.5" stroke-linecap="round"><path d="M10.2,1.6 C8,0.6 6.4,1.6 5.8,4.2 L3.0,17.4"/><path d="M3.6,7.2 H8.8"/><path d="M7.6,8.2 C9.5,10.5 12.5,14.5 15.4,16.6"/><path d="M15.6,8.2 C12.5,11.0 10.2,13.5 7.6,16.6"/></g></svg><svg style="left:163.5px;top:559.5px" width="12" height="11" viewBox="0 0 12 11"><polygon points="0.5,0.3 11,5 0.5,9.8" fill="#cdcdcd"/></svg><svg style="left:163.5px;top:585.5px" width="12" height="11" viewBox="0 0 12 11"><polygon points="0.5,0.5 10.8,0.5 5.6,10.5" fill="#cdcdcd"/></svg><svg style="left:189.5px;top:772px" width="12" height="11" viewBox="0 0 12 11"><polygon points="0.5,0.3 11,5 0.5,9.8" fill="#cdcdcd"/></svg><svg style="left:18px;top:610px" width="55" height="14" viewBox="0 0 55 14"><polygon points="9.2,0.6 9.2,12.6 0.8,6.6" fill="#c8c8c8"/><rect x="22.6" y="2.2" width="8.4" height="8.4" transform="rotate(45 26.9 6.5)" fill="#3a3a3a" stroke="#cdcdcd" stroke-width="1.5"/><polygon points="43.5,0.6 43.5,12.6 52.7,6.6" fill="#575757"/></svg><div class="a" style="left:209.30px;top:605.50px;width:24.50px;height:23.50px;background:#1e1e1e;"></div><svg style="left:212.2px;top:607.3px" width="18" height="19" viewBox="0 0 18 19"><g fill="none" stroke="#3f8fe0" stroke-width="1.6"><circle cx="9" cy="10.5" r="7.3"/><line x1="9" y1="1.6" x2="9" y2="3.2"/><line x1="6" y1="1.3" x2="12" y2="1.3" stroke-width="1.8"/><line x1="9" y1="10.5" x2="13" y2="6.2" stroke-width="1.8"/></g><circle cx="2.7" cy="4.4" r="1.3" fill="#3f8fe0"/></svg><svg style="left:211.9px;top:632.5px" width="18" height="19" viewBox="0 0 18 19"><g fill="none" stroke="#cdcdcd" stroke-width="1.6"><circle cx="9" cy="10.5" r="7.3"/><line x1="9" y1="1.6" x2="9" y2="3.2"/><line x1="6" y1="1.3" x2="12" y2="1.3" stroke-width="1.8"/></g><circle cx="2.7" cy="4.4" r="1.3" fill="#cdcdcd"/></svg><svg style="left:211.9px;top:659.1px" width="18" height="19" viewBox="0 0 18 19"><g fill="none" stroke="#cdcdcd" stroke-width="1.6"><circle cx="9" cy="10.5" r="7.3"/><line x1="9" y1="1.6" x2="9" y2="3.2"/><line x1="6" y1="1.3" x2="12" y2="1.3" stroke-width="1.8"/></g><circle cx="2.7" cy="4.4" r="1.3" fill="#cdcdcd"/></svg><svg style="left:211.9px;top:685.7px" width="18" height="19" viewBox="0 0 18 19"><g fill="none" stroke="#cdcdcd" stroke-width="1.6"><circle cx="9" cy="10.5" r="7.3"/><line x1="9" y1="1.6" x2="9" y2="3.2"/><line x1="6" y1="1.3" x2="12" y2="1.3" stroke-width="1.8"/></g><circle cx="2.7" cy="4.4" r="1.3" fill="#cdcdcd"/></svg><svg style="left:211.9px;top:712.3000000000001px" width="18" height="19" viewBox="0 0 18 19"><g fill="none" stroke="#cdcdcd" stroke-width="1.6"><circle cx="9" cy="10.5" r="7.3"/><line x1="9" y1="1.6" x2="9" y2="3.2"/><line x1="6" y1="1.3" x2="12" y2="1.3" stroke-width="1.8"/></g><circle cx="2.7" cy="4.4" r="1.3" fill="#cdcdcd"/></svg><svg style="left:211.9px;top:738.9000000000001px" width="18" height="19" viewBox="0 0 18 19"><g fill="none" stroke="#cdcdcd" stroke-width="1.6"><circle cx="9" cy="10.5" r="7.3"/><line x1="9" y1="1.6" x2="9" y2="3.2"/><line x1="6" y1="1.3" x2="12" y2="1.3" stroke-width="1.8"/></g><circle cx="2.7" cy="4.4" r="1.3" fill="#cdcdcd"/></svg><svg style="left:238px;top:609.5px" width="17" height="16" viewBox="0 0 17 16"><g fill="none" stroke="#cdcdcd" stroke-width="1.5"><polyline points="1,0.5 1,14.7 16.5,14.7"/><polyline points="2.3,3.2 5.8,9.7 8,4.9 9.6,11.1 13.9,3.3"/></g></svg><div class="a" style="left:593.50px;top:568.30px;width:3.40px;height:3.40px;background:#3f9de8;border-radius:50%"></div><div class="a" style="left:598.50px;top:568.30px;width:3.40px;height:3.40px;background:#3f9de8;border-radius:50%"></div><div class="a" style="left:603.50px;top:568.30px;width:3.40px;height:3.40px;background:#3f9de8;border-radius:50%"></div><div class="a" style="left:593.50px;top:594.90px;width:3.40px;height:3.40px;background:#3f9de8;border-radius:50%"></div><div class="a" style="left:598.50px;top:594.90px;width:3.40px;height:3.40px;background:#3f9de8;border-radius:50%"></div><div class="a" style="left:603.50px;top:594.90px;width:3.40px;height:3.40px;background:#3f9de8;border-radius:50%"></div><div class="a" style="left:431.20px;top:657.20px;width:177.50px;height:25.20px;background:#1b1b1b;border:1px solid #303030;border-radius:2px"></div><svg style="left:589.5px;top:666.4px" width="12" height="8" viewBox="0 0 12 8"><polyline points="1.2,1.5 6,6 10.8,1.5" fill="none" stroke="#cfcfcf" stroke-width="1.6"/></svg><div class="a" style="left:431.20px;top:737.00px;width:177.50px;height:25.20px;background:#1b1b1b;border:1px solid #303030;border-radius:2px"></div><svg style="left:589.5px;top:746.2px" width="12" height="8" viewBox="0 0 12 8"><polyline points="1.2,1.5 6,6 10.8,1.5" fill="none" stroke="#cfcfcf" stroke-width="1.6"/></svg><div class="a" style="left:433.20px;top:775.80px;width:12.60px;height:2.60px;background:#d8d8d8;"></div><div class="a" style="left:438.20px;top:770.80px;width:2.60px;height:12.60px;background:#d8d8d8;"></div><div class="a" style="left:451.50px;top:775.80px;width:15.50px;height:2.60px;background:#d8d8d8;"></div><div class="a" style="left:639.00px;top:188.20px;width:633.00px;height:14.50px;background:#111;"></div><div class="a" style="left:639.00px;top:189.50px;width:9.50px;height:12.10px;background:#3d8ee8;border-radius:6px 0 0 6px"></div><div class="a" style="left:649.00px;top:190.00px;width:623.00px;height:11.20px;background:#6d6d6d;"></div><div class="a" style="left:1192.00px;top:190.30px;width:3.60px;height:10.80px;background:#7d9cc8;"></div><div class="a" style="left:639.00px;top:202.70px;width:633.00px;height:27.10px;background:#262626;"></div><div class="a" style="left:639.00px;top:229.80px;width:633.00px;height:1.50px;background:#0e0e0e;"></div><div class="a" style="left:639.00px;top:230.20px;width:9.50px;height:21.70px;background:#3d8ee8;border-radius:6px 0 0 6px"></div><div class="a" style="left:649.00px;top:231.00px;width:623.00px;height:20.90px;background:#6a6a6a;"></div><div class="a" style="left:639.00px;top:251.90px;width:633.00px;height:7.00px;background:#101010;"></div><div class="a" style="left:649.00px;top:253.20px;width:623.00px;height:4.30px;background:#21c12a;"></div><div class="a" style="left:648.90px;top:219.60px;width:1.30px;height:10.20px;background:#a5a5a5;"></div><div class="a" style="left:718.90px;top:223.40px;width:1.30px;height:6.20px;background:#a5a5a5;"></div><div class="a" style="left:788.90px;top:223.40px;width:1.30px;height:6.20px;background:#a5a5a5;"></div><div class="a" style="left:858.90px;top:219.60px;width:1.30px;height:10.20px;background:#a5a5a5;"></div><div class="a" style="left:928.90px;top:223.40px;width:1.30px;height:6.20px;background:#a5a5a5;"></div><div class="a" style="left:998.90px;top:223.40px;width:1.30px;height:6.20px;background:#a5a5a5;"></div><div class="a" style="left:1068.90px;top:219.60px;width:1.30px;height:10.20px;background:#a5a5a5;"></div><div class="a" style="left:1138.90px;top:223.40px;width:1.30px;height:6.20px;background:#a5a5a5;"></div><div class="a" style="left:1208.90px;top:223.40px;width:1.30px;height:6.20px;background:#a5a5a5;"></div><div class="a" style="left:639px;top:202.7px;width:633px;height:27px;overflow:hidden"><div class="t" style="left:-3.59px;top:3.27px;font-size:13.979px;color:#a8a8a8;transform:scaleX(1.1937)">0:00f</div><div class="t" style="left:67.16px;top:3.05px;font-size:13.979px;color:#a8a8a8;transform:scaleX(1.1937)">10f</div><div class="t" style="left:137.16px;top:3.05px;font-size:13.979px;color:#a8a8a8;transform:scaleX(1.1937)">20f</div><div class="t" style="left:196.81px;top:3.27px;font-size:13.979px;color:#a8a8a8;transform:scaleX(1.1937)">01:00f</div><div class="t" style="left:277.16px;top:3.05px;font-size:13.979px;color:#a8a8a8;transform:scaleX(1.1937)">10f</div><div class="t" style="left:347.16px;top:3.05px;font-size:13.979px;color:#a8a8a8;transform:scaleX(1.1937)">20f</div><div class="t" style="left:406.81px;top:3.27px;font-size:13.979px;color:#a8a8a8;transform:scaleX(1.1937)">02:00f</div><div class="t" style="left:487.16px;top:3.05px;font-size:13.979px;color:#a8a8a8;transform:scaleX(1.1937)">10f</div><div class="t" style="left:557.16px;top:3.05px;font-size:13.979px;color:#a8a8a8;transform:scaleX(1.1937)">20f</div><div class="t" style="left:616.81px;top:3.27px;font-size:13.979px;color:#a8a8a8;transform:scaleX(1.1937)">03:00f</div></div><div class="a" style="left:649.00px;top:260.10px;width:623.00px;height:23.90px;background:#766c5b;border-left:1px solid #a29a88"></div><svg style="left:650px;top:261px" width="8" height="8" viewBox="0 0 8 8"><polygon points="0,0 6,0 0,6" fill="#1a1a1a"/></svg><div class="a" style="left:648.80px;top:525.90px;width:623.20px;height:23.60px;background:#a59a7e;border-top:1.6px solid #e6e1d4;border-left:1.6px solid #e6e1d4"></div><svg style="left:650.3px;top:527.5px" width="8" height="8" viewBox="0 0 8 8"><polygon points="0,0 6.5,0 0,6.5" fill="#0a0a0a"/></svg><div class="a" style="left:639.00px;top:524.40px;width:10.00px;height:25.10px;background:#474747;"></div><div class="a" style="left:649.00px;top:792.10px;width:623.00px;height:23.90px;background:#766c5b;border-left:1px solid #a29a88"></div><svg style="left:650px;top:793px" width="8" height="8" viewBox="0 0 8 8"><polygon points="0,0 6,0 0,6" fill="#1a1a1a"/></svg><svg style="left:957.1px;top:343.1px" width="15" height="15" viewBox="0 0 15 15"><defs><linearGradient id="kg" x1="0" x2="1" y1="0" y2="0"><stop offset="0" stop-color="#d8d8d8"/><stop offset="0.5" stop-color="#c4c4c4"/><stop offset="0.5" stop-color="#a6a6a6"/><stop offset="1" stop-color="#8c8c8c"/></linearGradient></defs><polygon points="7.5,1.3 13.7,7.5 7.5,13.7 1.3,7.5" fill="url(#kg)" stroke="#1d1d1d" stroke-width="0.8"/></svg><svg style="left:992.1px;top:343.1px" width="15" height="15" viewBox="0 0 15 15"><defs><linearGradient id="kg" x1="0" x2="1" y1="0" y2="0"><stop offset="0" stop-color="#d8d8d8"/><stop offset="0.5" stop-color="#c4c4c4"/><stop offset="0.5" stop-color="#a6a6a6"/><stop offset="1" stop-color="#8c8c8c"/></linearGradient></defs><polygon points="7.5,1.3 13.7,7.5 7.5,13.7 1.3,7.5" fill="#d0d0d0" stroke="#1d1d1d" stroke-width="0.8"/></svg><svg style="left:1131.9px;top:343.1px" width="15" height="15" viewBox="0 0 15 15"><defs><linearGradient id="kg" x1="0" x2="1" y1="0" y2="0"><stop offset="0" stop-color="#d8d8d8"/><stop offset="0.5" stop-color="#c4c4c4"/><stop offset="0.5" stop-color="#a6a6a6"/><stop offset="1" stop-color="#8c8c8c"/></linearGradient></defs><polygon points="7.5,1.3 13.7,7.5 7.5,13.7 1.3,7.5" fill="url(#kg)" stroke="#1d1d1d" stroke-width="0.8"/></svg><svg style="left:957.1px;top:609.1px" width="15" height="15" viewBox="0 0 15 15"><defs><linearGradient id="kg" x1="0" x2="1" y1="0" y2="0"><stop offset="0" stop-color="#d8d8d8"/><stop offset="0.5" stop-color="#c4c4c4"/><stop offset="0.5" stop-color="#a6a6a6"/><stop offset="1" stop-color="#8c8c8c"/></linearGradient></defs><polygon points="7.5,1.3 13.7,7.5 7.5,13.7 1.3,7.5" fill="url(#kg)" stroke="#1d1d1d" stroke-width="0.8"/></svg><svg style="left:992.1px;top:609.1px" width="15" height="15" viewBox="0 0 15 15"><defs><linearGradient id="kg" x1="0" x2="1" y1="0" y2="0"><stop offset="0" stop-color="#d8d8d8"/><stop offset="0.5" stop-color="#c4c4c4"/><stop offset="0.5" stop-color="#a6a6a6"/><stop offset="1" stop-color="#8c8c8c"/></linearGradient></defs><polygon points="7.5,1.3 13.7,7.5 7.5,13.7 1.3,7.5" fill="#d0d0d0" stroke="#1d1d1d" stroke-width="0.8"/></svg><svg style="left:1131.9px;top:609.1px" width="15" height="15" viewBox="0 0 15 15"><defs><linearGradient id="kg" x1="0" x2="1" y1="0" y2="0"><stop offset="0" stop-color="#d8d8d8"/><stop offset="0.5" stop-color="#c4c4c4"/><stop offset="0.5" stop-color="#a6a6a6"/><stop offset="1" stop-color="#8c8c8c"/></linearGradient></defs><polygon points="7.5,1.3 13.7,7.5 7.5,13.7 1.3,7.5" fill="url(#kg)" stroke="#1d1d1d" stroke-width="0.8"/></svg><div class="a" style="left:575.20px;top:106.10px;width:157.80px;height:33.60px;background:#2a2a2a;"></div><div class="a" style="left:799.30px;top:71.20px;width:85.50px;height:43.60px;background:#2a2a2a;"></div><div class="a" style="left:975.30px;top:103.00px;width:75.70px;height:39.40px;background:#2a2a2a;"></div><div class="a" style="left:686.00px;top:870.00px;width:145.80px;height:39.70px;background:#2a2a2a;"></div><div class="a" style="left:876.20px;top:937.70px;width:81.50px;height:40.00px;background:#2a2a2a;"></div><div class="a" style="left:1034.20px;top:869.00px;width:85.80px;height:39.60px;background:#2a2a2a;"></div><svg style="left:0;top:0" width="1280" height="1040" viewBox="0 0 1280 1040"><line x1="712.0" y1="140.0" x2="939.2" y2="334.2" stroke="#062a42" stroke-width="7"/><polygon points="950.6,343.9 927.1,337.6 940.0,334.8 940.7,321.6" fill="#07304a" stroke="#07304a" stroke-width="3" stroke-linejoin="round"/><line x1="872.8" y1="115.0" x2="990.7" y2="326.6" stroke="#062a42" stroke-width="7"/><polygon points="998.0,339.7 978.1,325.6 991.2,327.5 996.5,315.4" fill="#07304a" stroke="#07304a" stroke-width="3" stroke-linejoin="round"/><line x1="1021.0" y1="142.5" x2="1125.7" y2="330.7" stroke="#062a42" stroke-width="7"/><polygon points="1133.0,343.8 1113.1,329.7 1126.2,331.6 1131.5,319.5" fill="#07304a" stroke="#07304a" stroke-width="3" stroke-linejoin="round"/><line x1="815.3" y1="870.0" x2="940.7" y2="644.6" stroke="#062a42" stroke-width="7"/><polygon points="948.0,631.5 946.5,655.8 941.2,643.7 928.1,645.6" fill="#07304a" stroke="#07304a" stroke-width="3" stroke-linejoin="round"/><line x1="922.3" y1="938.0" x2="993.5" y2="644.2" stroke="#062a42" stroke-width="7"/><polygon points="997.0,629.6 1002.0,653.5 993.7,643.2 981.6,648.5" fill="#07304a" stroke="#07304a" stroke-width="3" stroke-linejoin="round"/><line x1="1079.5" y1="869.0" x2="1134.0" y2="644.1" stroke="#062a42" stroke-width="7"/><polygon points="1137.5,629.5 1142.5,653.4 1134.2,643.1 1122.1,648.4" fill="#07304a" stroke="#07304a" stroke-width="3" stroke-linejoin="round"/><line x1="712.0" y1="140.0" x2="939.2" y2="334.2" stroke="#1aa8ea" stroke-width="4.4"/><polygon points="950.6,343.9 927.1,337.6 940.0,334.8 940.7,321.6" fill="#1aa8ea"/><line x1="872.8" y1="115.0" x2="990.7" y2="326.6" stroke="#1aa8ea" stroke-width="4.4"/><polygon points="998.0,339.7 978.1,325.6 991.2,327.5 996.5,315.4" fill="#1aa8ea"/><line x1="1021.0" y1="142.5" x2="1125.7" y2="330.7" stroke="#1aa8ea" stroke-width="4.4"/><polygon points="1133.0,343.8 1113.1,329.7 1126.2,331.6 1131.5,319.5" fill="#1aa8ea"/><line x1="815.3" y1="870.0" x2="940.7" y2="644.6" stroke="#1aa8ea" stroke-width="4.4"/><polygon points="948.0,631.5 946.5,655.8 941.2,643.7 928.1,645.6" fill="#1aa8ea"/><line x1="922.3" y1="938.0" x2="993.5" y2="644.2" stroke="#1aa8ea" stroke-width="4.4"/><polygon points="997.0,629.6 1002.0,653.5 993.7,643.2 981.6,648.5" fill="#1aa8ea"/><line x1="1079.5" y1="869.0" x2="1134.0" y2="644.1" stroke="#1aa8ea" stroke-width="4.4"/><polygon points="1137.5,629.5 1142.5,653.4 1134.2,643.1 1122.1,648.4" fill="#1aa8ea"/></svg><div class="t" style="left:26.46px;top:186.10px;font-size:22.900px;font-weight:700;color:#3f9de8;transform:scaleX(1.0022);">0;00;03;01</div><div class="t" style="left:22.92px;top:210.61px;font-size:15.300px;font-weight:400;color:#3588d8;transform:scaleX(1.0313);">00091 (29.97 fps)</div><div class="t" style="left:155.28px;top:238.27px;font-size:15.438px;font-weight:400;color:#a8a8a8;transform:scaleX(1.2033);">#</div><div class="t" style="left:202.31px;top:238.62px;font-size:15.000px;font-weight:400;color:#a8a8a8;transform:scaleX(1.0402);">レイヤー名</div><div class="t" style="left:158.50px;top:264.43px;font-size:14.947px;font-weight:400;color:#a8a8a8;transform:scaleX(0.9816);">1</div><div class="t" style="left:228.50px;top:266.15px;font-size:14.587px;font-weight:400;color:#a8a8a8;transform:scaleX(1.0259);-webkit-text-stroke:0.3px currentColor">VIRTUAL SPACE Blue</div><div class="t" style="left:158.32px;top:530.71px;font-size:14.947px;font-weight:400;color:#b0b0b0;transform:scaleX(0.9816);">2</div><div class="t" style="left:228.55px;top:531.32px;font-size:14.587px;font-weight:400;color:#1c1c1c;transform:scaleX(1.0259);-webkit-text-stroke:0.3px currentColor">VIRTUAL SPACE Green</div><div class="t" style="left:158.75px;top:797.46px;font-size:14.947px;font-weight:400;color:#a8a8a8;transform:scaleX(0.9816);">3</div><div class="t" style="left:227.86px;top:797.52px;font-size:14.587px;font-weight:400;color:#a8a8a8;transform:scaleX(1.0259);-webkit-text-stroke:0.3px currentColor">VIRTUAL SPACE Red</div><div class="t" style="left:189.49px;top:290.60px;font-size:15.000px;font-weight:400;color:#a8a8a8;transform:scaleX(1.0310);-webkit-text-stroke:0.2px currentColor">チャンネル設定</div><div class="t" style="left:429.17px;top:291.23px;font-size:16.000px;font-weight:700;color:#3f9de8;transform:scaleX(1.0111);">ﾘｾｯﾄ</div><div class="t" style="left:189.28px;top:316.43px;font-size:15.000px;font-weight:400;color:#a8a8a8;transform:scaleX(1.0310);-webkit-text-stroke:0.2px currentColor">レンズ補正</div><div class="t" style="left:429.17px;top:317.43px;font-size:16.000px;font-weight:700;color:#3f9de8;transform:scaleX(1.0111);">ﾘｾｯﾄ</div><div class="t" style="left:265.16px;top:344.60px;font-size:15.000px;font-weight:400;color:#a8a8a8;transform:scaleX(1.0310);-webkit-text-stroke:0.2px currentColor">視界</div><div class="t" style="left:431.28px;top:344.17px;font-size:15.200px;font-weight:400;color:#3f9de8;transform:scaleX(1.1471);-webkit-text-stroke:0.55px currentColor">16.0</div><div class="t" style="left:238.14px;top:370.70px;font-size:15.000px;font-weight:400;color:#a8a8a8;transform:scaleX(1.0310);-webkit-text-stroke:0.2px currentColor">レンズディスト...を反転</div><div class="t" style="left:431.55px;top:370.65px;font-size:15.000px;font-weight:400;color:#3f9de8;transform:scaleX(1.0562);-webkit-text-stroke:0.35px currentColor">オン</div><div class="t" style="left:238.29px;top:397.18px;font-size:15.000px;font-weight:400;color:#a8a8a8;transform:scaleX(1.0310);-webkit-text-stroke:0.2px currentColor">視界の方向</div><div class="t" style="left:440.86px;top:399.27px;font-size:13.000px;font-weight:400;color:#d4d4d4;transform:scaleX(1.1927);-webkit-text-stroke:0.35px currentColor">対角</div><div class="t" style="left:238.08px;top:424.32px;font-size:15.000px;font-weight:400;color:#a8a8a8;transform:scaleX(1.0310);-webkit-text-stroke:0.2px currentColor">視界の中心</div><div class="t" style="left:432.34px;top:424.70px;font-size:15.200px;font-weight:400;color:#3f9de8;transform:scaleX(1.1471);-webkit-text-stroke:0.55px currentColor">960.0,540.0</div><div class="t" style="left:238.85px;top:451.20px;font-size:15.000px;font-weight:400;color:#a8a8a8;transform:scaleX(1.0310);-webkit-text-stroke:0.2px currentColor">最適ピクセル(...効にする)</div><div class="t" style="left:431.45px;top:450.38px;font-size:15.000px;font-weight:400;color:#3f9de8;transform:scaleX(1.0562);-webkit-text-stroke:0.35px currentColor">オフ</div><div class="t" style="left:238.55px;top:476.35px;font-size:15.000px;font-weight:400;color:#a8a8a8;transform:scaleX(1.0310);-webkit-text-stroke:0.2px currentColor">サイズ変更</div><div class="t" style="left:439.94px;top:477.00px;font-size:13.000px;font-weight:400;color:#d4d4d4;transform:scaleX(1.1927);-webkit-text-stroke:0.35px currentColor">無制限</div><div class="t" style="left:214.93px;top:503.23px;font-size:15.000px;font-weight:400;color:#a8a8a8;transform:scaleX(1.0310);-webkit-text-stroke:0.2px currentColor">コンポジットオプション</div><div class="t" style="left:189.49px;top:556.60px;font-size:15.000px;font-weight:400;color:#a8a8a8;transform:scaleX(1.0310);-webkit-text-stroke:0.2px currentColor">チャンネル設定</div><div class="t" style="left:429.17px;top:557.23px;font-size:16.000px;font-weight:700;color:#3f9de8;transform:scaleX(1.0111);">ﾘｾｯﾄ</div><div class="t" style="left:189.28px;top:582.43px;font-size:15.000px;font-weight:400;color:#a8a8a8;transform:scaleX(1.0310);-webkit-text-stroke:0.2px currentColor">レンズ補正</div><div class="t" style="left:429.17px;top:583.43px;font-size:16.000px;font-weight:700;color:#3f9de8;transform:scaleX(1.0111);">ﾘｾｯﾄ</div><div class="t" style="left:265.16px;top:610.60px;font-size:15.000px;font-weight:400;color:#a8a8a8;transform:scaleX(1.0310);-webkit-text-stroke:0.2px currentColor">視界</div><div class="t" style="left:431.28px;top:610.17px;font-size:15.200px;font-weight:400;color:#3f9de8;transform:scaleX(1.1471);-webkit-text-stroke:0.55px currentColor">13.0</div><div class="t" style="left:238.14px;top:636.70px;font-size:15.000px;font-weight:400;color:#a8a8a8;transform:scaleX(1.0310);-webkit-text-stroke:0.2px currentColor">レンズディスト...を反転</div><div class="t" style="left:431.55px;top:636.65px;font-size:15.000px;font-weight:400;color:#3f9de8;transform:scaleX(1.0562);-webkit-text-stroke:0.35px currentColor">オン</div><div class="t" style="left:238.29px;top:663.18px;font-size:15.000px;font-weight:400;color:#a8a8a8;transform:scaleX(1.0310);-webkit-text-stroke:0.2px currentColor">視界の方向</div><div class="t" style="left:440.86px;top:665.27px;font-size:13.000px;font-weight:400;color:#d4d4d4;transform:scaleX(1.1927);-webkit-text-stroke:0.35px currentColor">対角</div><div class="t" style="left:238.08px;top:690.32px;font-size:15.000px;font-weight:400;color:#a8a8a8;transform:scaleX(1.0310);-webkit-text-stroke:0.2px currentColor">視界の中心</div><div class="t" style="left:432.34px;top:690.70px;font-size:15.200px;font-weight:400;color:#3f9de8;transform:scaleX(1.1471);-webkit-text-stroke:0.55px currentColor">960.0,540.0</div><div class="t" style="left:238.85px;top:717.20px;font-size:15.000px;font-weight:400;color:#a8a8a8;transform:scaleX(1.0310);-webkit-text-stroke:0.2px currentColor">最適ピクセル(...効にする)</div><div class="t" style="left:431.45px;top:716.38px;font-size:15.000px;font-weight:400;color:#3f9de8;transform:scaleX(1.0562);-webkit-text-stroke:0.35px currentColor">オフ</div><div class="t" style="left:238.55px;top:742.35px;font-size:15.000px;font-weight:400;color:#a8a8a8;transform:scaleX(1.0310);-webkit-text-stroke:0.2px currentColor">サイズ変更</div><div class="t" style="left:439.94px;top:743.00px;font-size:13.000px;font-weight:400;color:#d4d4d4;transform:scaleX(1.1927);-webkit-text-stroke:0.35px currentColor">無制限</div><div class="t" style="left:214.93px;top:769.23px;font-size:15.000px;font-weight:400;color:#a8a8a8;transform:scaleX(1.0310);-webkit-text-stroke:0.2px currentColor">コンポジットオプション</div><div class="t" style="left:567.66px;top:77.10px;font-size:25.964px;font-weight:400;color:#a0a0a0;transform:scaleX(1.1638);-webkit-text-stroke:0.25px currentColor">1:</div><div class="t" style="left:595.03px;top:77.10px;font-size:25.963px;font-weight:400;color:#a0a0a0;transform:scaleX(0.9712);-webkit-text-stroke:0.25px currentColor">15</div><div class="t" style="left:624.88px;top:77.55px;font-size:21.000px;font-weight:400;color:#a0a0a0;transform:scaleX(0.9955);-webkit-text-stroke:0.45px currentColor">フレーム</div><div class="t" style="left:708.42px;top:78.67px;font-size:22.000px;font-weight:400;color:#a0a0a0;transform:scaleX(1.1987);-webkit-text-stroke:0.4px currentColor">目</div><div class="t" style="left:787.39px;top:37.20px;font-size:25.964px;font-weight:400;color:#a0a0a0;transform:scaleX(1.1638);-webkit-text-stroke:0.25px currentColor">1:</div><div class="t" style="left:814.73px;top:37.20px;font-size:25.963px;font-weight:400;color:#a0a0a0;transform:scaleX(0.9712);-webkit-text-stroke:0.25px currentColor">20</div><div class="t" style="left:845.47px;top:38.05px;font-size:21.000px;font-weight:400;color:#a0a0a0;transform:scaleX(0.9955);-webkit-text-stroke:0.45px currentColor">フレーム</div><div class="t" style="left:930.19px;top:38.22px;font-size:22.000px;font-weight:400;color:#a0a0a0;transform:scaleX(1.1987);-webkit-text-stroke:0.4px currentColor">目</div><div class="t" style="left:957.38px;top:73.70px;font-size:25.964px;font-weight:400;color:#a0a0a0;transform:scaleX(1.1638);-webkit-text-stroke:0.25px currentColor">2:</div><div class="t" style="left:985.16px;top:73.70px;font-size:25.963px;font-weight:400;color:#a0a0a0;transform:scaleX(0.9712);-webkit-text-stroke:0.25px currentColor">10</div><div class="t" style="left:1015.42px;top:74.38px;font-size:21.000px;font-weight:400;color:#a0a0a0;transform:scaleX(0.9955);-webkit-text-stroke:0.45px currentColor">フレーム</div><div class="t" style="left:1099.70px;top:75.43px;font-size:22.000px;font-weight:400;color:#a0a0a0;transform:scaleX(1.1987);-webkit-text-stroke:0.4px currentColor">目</div><div class="t" style="left:666.62px;top:914.59px;font-size:25.964px;font-weight:400;color:#a0a0a0;transform:scaleX(1.1638);-webkit-text-stroke:0.25px currentColor">1:</div><div class="t" style="left:693.92px;top:914.60px;font-size:25.963px;font-weight:400;color:#a0a0a0;transform:scaleX(0.9712);-webkit-text-stroke:0.25px currentColor">15</div><div class="t" style="left:722.72px;top:915.57px;font-size:21.000px;font-weight:400;color:#a0a0a0;transform:scaleX(0.9955);-webkit-text-stroke:0.45px currentColor">フレーム</div><div class="t" style="left:808.38px;top:915.95px;font-size:22.000px;font-weight:400;color:#a0a0a0;transform:scaleX(1.1987);-webkit-text-stroke:0.4px currentColor">目</div><div class="t" style="left:827.09px;top:981.80px;font-size:25.964px;font-weight:400;color:#a0a0a0;transform:scaleX(1.1638);-webkit-text-stroke:0.25px currentColor">1:</div><div class="t" style="left:855.38px;top:981.80px;font-size:25.963px;font-weight:400;color:#a0a0a0;transform:scaleX(0.9712);-webkit-text-stroke:0.25px currentColor">20</div><div class="t" style="left:885.79px;top:983.06px;font-size:21.000px;font-weight:400;color:#a0a0a0;transform:scaleX(0.9955);-webkit-text-stroke:0.45px currentColor">フレーム</div><div class="t" style="left:969.71px;top:983.69px;font-size:22.000px;font-weight:400;color:#a0a0a0;transform:scaleX(1.1987);-webkit-text-stroke:0.4px currentColor">目</div><div class="t" style="left:1007.25px;top:918.50px;font-size:25.964px;font-weight:400;color:#a0a0a0;transform:scaleX(1.1638);-webkit-text-stroke:0.25px currentColor">2:</div><div class="t" style="left:1036.50px;top:919.49px;font-size:25.963px;font-weight:400;color:#a0a0a0;transform:scaleX(0.9712);-webkit-text-stroke:0.25px currentColor">10</div><div class="t" style="left:1066.52px;top:920.35px;font-size:21.000px;font-weight:400;color:#a0a0a0;transform:scaleX(0.9955);-webkit-text-stroke:0.45px currentColor">フレーム</div><div class="t" style="left:1150.05px;top:920.62px;font-size:22.000px;font-weight:400;color:#a0a0a0;transform:scaleX(1.1987);-webkit-text-stroke:0.4px currentColor">目</div><div class="t" style="left:584.88px;top:110.69px;font-size:21.000px;font-weight:400;color:#a0a0a0;transform:scaleX(1.0772);-webkit-text-stroke:0.35px currentColor">視界</div><div class="t" style="left:690.98px;top:876.77px;font-size:21.000px;font-weight:400;color:#a0a0a0;transform:scaleX(1.0772);-webkit-text-stroke:0.35px currentColor">視界</div><div class="t" style="left:672.05px;top:113.29px;font-size:23.598px;font-weight:400;color:#48a4ee;transform:scaleX(1.0331);-webkit-text-stroke:0.9px currentColor">60.0</div><div class="t" style="left:819.25px;top:83.09px;font-size:23.598px;font-weight:400;color:#48a4ee;transform:scaleX(1.0331);-webkit-text-stroke:0.9px currentColor">30.0</div><div class="t" style="left:990.56px;top:112.20px;font-size:23.598px;font-weight:400;color:#48a4ee;transform:scaleX(1.0331);-webkit-text-stroke:0.9px currentColor">16.0</div><div class="t" style="left:770.73px;top:879.66px;font-size:23.598px;font-weight:400;color:#48a4ee;transform:scaleX(1.0331);-webkit-text-stroke:0.9px currentColor">13.0</div><div class="t" style="left:892.82px;top:948.98px;font-size:23.598px;font-weight:400;color:#48a4ee;transform:scaleX(1.0331);-webkit-text-stroke:0.9px currentColor">80.0</div><div class="t" style="left:1053.88px;top:880.70px;font-size:23.598px;font-weight:400;color:#48a4ee;transform:scaleX(1.0331);-webkit-text-stroke:0.9px currentColor">13.0</div></body></html>
